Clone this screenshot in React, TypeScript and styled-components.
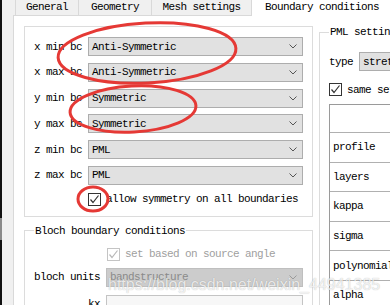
import React from "react";
import styled, { createGlobalStyle } from "styled-components";

const GlobalStyle = createGlobalStyle`
  html, body { margin: 0; padding: 0; background: #f0f0f0; }
  * { box-sizing: border-box; }
`;

const Window = styled.div`
  position: relative;
  width: 390px;
  height: 305px;
  overflow: hidden;
  display: flex;
  background: #f0f0f0;
  font-family: "Liberation Mono", "DejaVu Sans Mono", monospace;
  font-size: 11px;
  letter-spacing: -0.6px;
  line-height: 12px;
  color: #000;
`;

const EdgeStrip = styled.div`
  flex: none;
  width: 2px;
  background: #111;
  display: flex;
  flex-direction: column;
`;

const EdgeThumb = styled.div`
  margin-top: 218px;
  height: 22px;
  background: #8a8a8a;
`;

const Main = styled.div`
  flex: 1;
  min-width: 0;
  display: flex;
  flex-direction: column;
  padding-left: 11px;
`;

const TabBar = styled.div`
  flex: none;
  height: 15px;
  display: flex;
  align-items: flex-end;
  padding-left: 2px;
`;

const Tab = styled.div<{ $w: number; $active?: boolean }>`
  flex: none;
  width: ${(p) => p.$w}px;
  height: ${(p) => (p.$active ? 16 : 15)}px;
  margin-bottom: ${(p) => (p.$active ? -1 : 0)}px;
  position: relative;
  z-index: ${(p) => (p.$active ? 2 : 0)};
  background: ${(p) => (p.$active ? "#ffffff" : "#f0f0f0")};
  border-left: 1px solid #d9d9d9;
  border-right: ${(p) => (p.$active ? "1px solid #d9d9d9" : "none")};
  display: flex;
  align-items: center;
  justify-content: ${(p) => (p.$active ? "flex-start" : "center")};
  padding: ${(p) => (p.$active ? "0 0 2px 13px" : "0 0 1px 0")};
  white-space: nowrap;
`;

const Pane = styled.div`
  flex: 1;
  display: flex;
  gap: 6px;
  align-items: flex-start;
  background: #ffffff;
  border-top: 1px solid #d9d9d9;
  border-left: 1px solid #d9d9d9;
  padding: 10px 0 0 10px;
`;

const LeftColumn = styled.div`
  flex: none;
  width: 289px;
  display: flex;
  flex-direction: column;
`;

const PlainGroup = styled.div`
  border: 1px solid #dcdcdc;
  padding: 10px 9px 10px 0;
  display: grid;
  grid-template-columns: 57px 215px;
  column-gap: 6px;
  row-gap: 6.8px;
  align-items: center;
`;

const Fieldset = styled.fieldset<{ $w: number }>`
  flex: none;
  width: ${(p) => p.$w}px;
  margin: 0;
  border: 1px solid #dcdcdc;
  padding: 0 9px 10px 9px;
  min-width: 0;
`;

const BlochFieldset = styled(Fieldset)`
  margin-top: 8px;
  padding-top: 11px;
  display: grid;
  grid-template-columns: 66px 197px;
  column-gap: 6px;
  align-items: center;
`;

const PmlFieldset = styled(Fieldset)`
  padding-top: 14px;
  display: flex;
  flex-direction: column;
  align-items: flex-start;
`;

const Legend = styled.legend`
  padding: 0 1px;
  line-height: 12px;
  white-space: nowrap;
`;

const Label = styled.div<{ $gapAbove?: number }>`
  text-align: right;
  white-space: nowrap;
  margin-top: ${(p) => p.$gapAbove ?? 0}px;
`;

const Combo = styled.div<{ $disabled?: boolean; $w?: number; $gapAbove?: number }>`
  height: 19px;
  ${(p) => (p.$w ? `width: ${p.$w}px; flex: none;` : "")}
  margin-top: ${(p) => p.$gapAbove ?? 0}px;
  background: ${(p) => (p.$disabled ? "#cccccc" : "#e1e1e1")};
  border: 1px solid ${(p) => (p.$disabled ? "#bfbfbf" : "#adadad")};
  color: ${(p) => (p.$disabled ? "#8a8a8a" : "#000")};
  display: flex;
  align-items: center;
  justify-content: space-between;
  padding: 0 5px 0 3px;
  white-space: nowrap;
  overflow: hidden;
`;

const LineEdit = styled.div`
  height: 19px;
  margin-top: 8px;
  background: #f7f7f7;
  border: 1px solid #c4c4c4;
`;

const CheckRow = styled.div<{ $disabled?: boolean; $offset?: number; $gapAbove?: number }>`
  grid-column: 2;
  display: flex;
  align-items: center;
  gap: 5px;
  margin-left: ${(p) => p.$offset ?? 0}px;
  margin-top: ${(p) => p.$gapAbove ?? 0}px;
  color: ${(p) => (p.$disabled ? "#a0a0a0" : "#000")};
  white-space: nowrap;
`;

const CheckBox = styled.div<{ $disabled?: boolean }>`
  flex: none;
  width: 13px;
  height: 13px;
  background: #fff;
  border: 1px solid ${(p) => (p.$disabled ? "#c4c4c4" : "#333")};
  display: flex;
  align-items: center;
  justify-content: center;
`;

const TypeRow = styled.div`
  display: flex;
  align-items: center;
  gap: 6px;
  white-space: nowrap;
`;

const PmlCheckRow = styled.div`
  margin-top: 12px;
  display: flex;
  align-items: center;
  gap: 5px;
  white-space: nowrap;
`;

const Table = styled.div`
  margin-top: 8px;
  width: 200px;
  border-top: 1px solid #9a9a9a;
  border-left: 1px solid #9a9a9a;
  background: #fff;
`;

const TableHeader = styled.div`
  height: 27px;
`;

const TableRow = styled.div`
  height: 29.6px;
  border-top: 1px solid #b0b0b0;
  display: flex;
  align-items: center;
  padding-left: 3px;
  white-space: nowrap;
`;

const Annotations = styled.svg`
  position: absolute;
  left: 0;
  top: 0;
  pointer-events: none;
`;

const Watermark = styled.div`
  position: absolute;
  left: 108px;
  top: 277px;
  font-family: "Liberation Sans", Arial, sans-serif;
  font-size: 16px;
  line-height: 16px;
  letter-spacing: 0;
  color: rgba(255, 255, 255, 0.8);
  text-shadow: 0 0 1px rgba(0, 0, 0, 0.3);
  white-space: nowrap;
  pointer-events: none;
`;

const Chevron = ({ color = "#555" }: { color?: string }) => (
  <svg width="8" height="5" viewBox="0 0 8 5">
    <polyline points="0.5,0.5 4,4 7.5,0.5" fill="none" stroke={color} strokeWidth="1" />
  </svg>
);

const Check = ({ color = "#333" }: { color?: string }) => (
  <svg width="11" height="11" viewBox="0 0 11 11">
    <polyline points="1.5,5.5 4,8.5 9.5,1.5" fill="none" stroke={color} strokeWidth="1.2" />
  </svg>
);

const bcRows: [string, string][] = [
  ["x min bc", "Anti-Symmetric"],
  ["x max bc", "Anti-Symmetric"],
  ["y min bc", "Symmetric"],
  ["y max bc", "Symmetric"],
  ["z min bc", "PML"],
  ["z max bc", "PML"],
];

const pmlRows = ["profile", "layers", "kappa", "sigma", "polynomial", "alpha"];

export default function App() {
  return (
    <>
      <GlobalStyle />
      <Window>
        <EdgeStrip>
          <EdgeThumb />
        </EdgeStrip>
        <Main>
          <TabBar>
            <Tab $w={63}>General</Tab>
            <Tab $w={73}>Geometry</Tab>
            <Tab $w={100}>Mesh settings</Tab>
            <Tab $w={150} $active>
              Boundary conditions
            </Tab>
          </TabBar>
          <Pane>
            <LeftColumn>
              <PlainGroup>
                {bcRows.map(([label, value]) => (
                  <React.Fragment key={label}>
                    <Label>{label}</Label>
                    <Combo>
                      <span>{value}</span>
                      <Chevron />
                    </Combo>
                  </React.Fragment>
                ))}
                <CheckRow $gapAbove={1.2}>
                  <CheckBox>
                    <Check />
                  </CheckBox>
                  <span>allow symmetry on all boundaries</span>
                </CheckRow>
              </PlainGroup>
              <BlochFieldset $w={289}>
                <Legend>Bloch boundary conditions</Legend>
                <CheckRow $disabled $offset={1}>
                  <CheckBox $disabled>
                    <Check color="#b8b8b8" />
                  </CheckBox>
                  <span>set based on source angle</span>
                </CheckRow>
                <Label $gapAbove={7}>bloch units</Label>
                <Combo $disabled $gapAbove={7}>
                  <span>bandstructure</span>
                  <Chevron color="#9a9a9a" />
                </Combo>
                <Label $gapAbove={8}>kx</Label>
                <LineEdit />
              </BlochFieldset>
            </LeftColumn>
            <PmlFieldset $w={220}>
              <Legend>PML settings</Legend>
              <TypeRow>
                <span>type</span>
                <Combo $w={170}>
                  <span>stretched coordinate PML</span>
                  <Chevron />
                </Combo>
              </TypeRow>
              <PmlCheckRow>
                <CheckBox>
                  <Check />
                </CheckBox>
                <span>same settings on all boundaries</span>
              </PmlCheckRow>
              <Table>
                <TableHeader />
                {pmlRows.map((r) => (
                  <TableRow key={r}>{r}</TableRow>
                ))}
              </Table>
            </PmlFieldset>
          </Pane>
        </Main>
        <Annotations width="390" height="305" viewBox="0 0 390 305">
          <ellipse cx="147" cy="53" rx="89" ry="30" transform="rotate(-3 147 53)" fill="none" stroke="#e53935" strokeWidth="3" />
          <ellipse cx="133" cy="109" rx="63" ry="23" transform="rotate(-3 133 109)" fill="none" stroke="#e53935" strokeWidth="3" />
          <ellipse cx="93" cy="199" rx="15" ry="12" fill="none" stroke="#e53935" strokeWidth="3" />
        </Annotations>
        <Watermark>https://blog.csdn.net/weixin_44941385</Watermark>
      </Window>
    </>
  );
}
